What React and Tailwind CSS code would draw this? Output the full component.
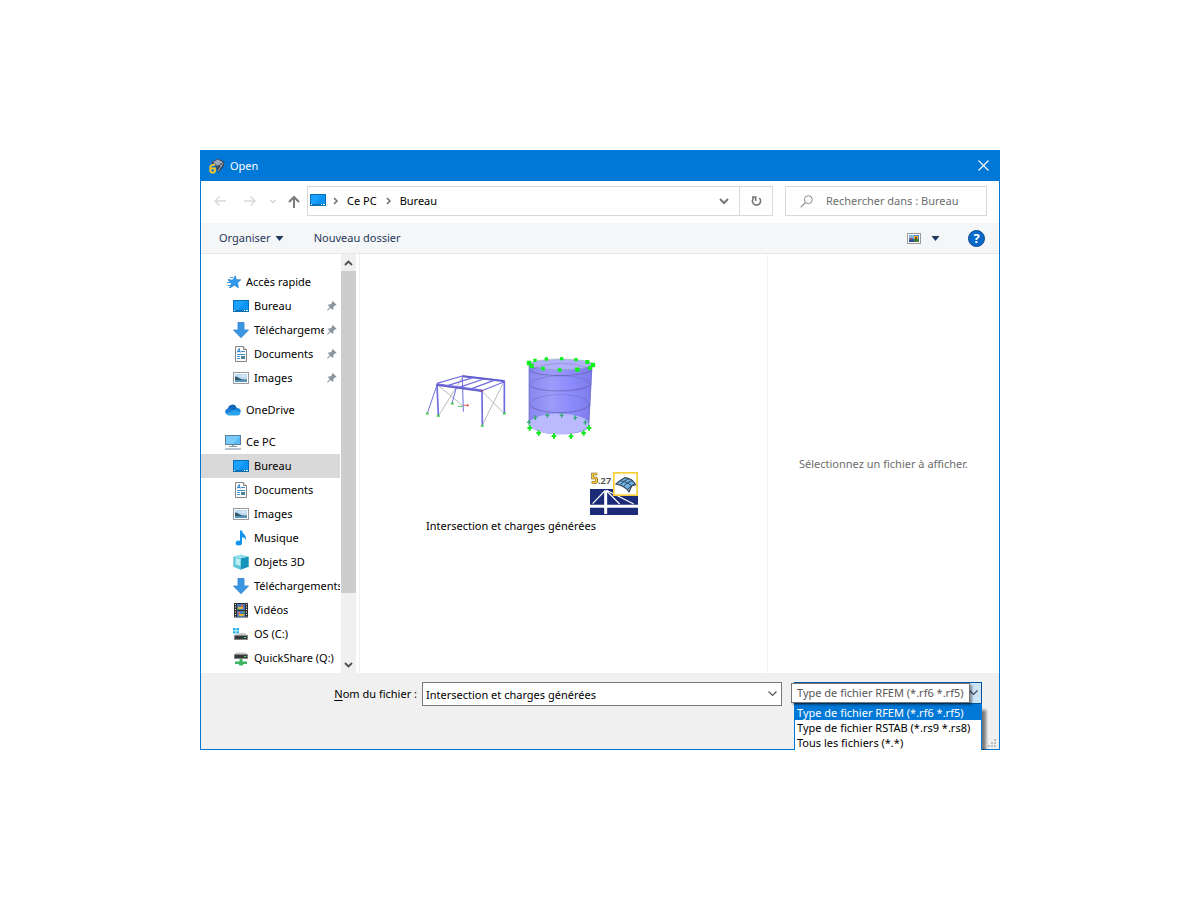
import React from "react";

function DesktopIcon() {
  return (
    <svg width="16" height="16" viewBox="0 0 16 16" aria-hidden="true">
      <rect x="0.5" y="2.5" width="15" height="11" fill="#1ba1fb" stroke="#0b6fb4" />
      <path d="M4 13 L12 3 H15 V13 Z" fill="#0e95f3" />
      <path d="M1 12.5 H15" stroke="#0b74bd" />
      <path d="M1 12.5 H2 M11 12.5 H12 M13 12.5 H15" stroke="#fff" />
    </svg>
  );
}

function StarIcon() {
  return (
    <svg width="16" height="16" viewBox="0 0 16 16" aria-hidden="true">
      <path
        d="M10.2 1.8 L11.3 5.7 L15.8 5.8 L12.5 8.8 L13.4 13.8 L9.5 11.2 L4.6 14 L6.3 9.5 L3.4 6.2 L8 5.9 Z"
        fill="#2f9bea"
        stroke="#1b7dc9"
        strokeWidth="0.7"
      />
      <path d="M5 3.5 H8 M3 5.5 H5 M2 8.5 H5 M2.500 11.500 H5" stroke="#3f9fe6" strokeWidth="1" />
    </svg>
  );
}

function DownloadIcon() {
  return (
    <svg width="16" height="16" viewBox="0 0 16 16" aria-hidden="true">
      <path d="M5 0.5 H11 V8 H15.5 L8 15.7 L0.5 8 H5 Z" fill="#3b97e4" stroke="#2b80cb" strokeWidth="0.8" />
    </svg>
  );
}

function DocumentIcon() {
  return (
    <svg width="16" height="16" viewBox="0 0 16 16" aria-hidden="true">
      <path d="M2.5 0.5 H10.5 L13.5 3.5 V15.5 H2.5 Z" fill="#fff" stroke="#868686" />
      <path d="M10.5 0.5 V3.5 H13.5" fill="#eee" stroke="#868686" />
      <path d="M4 6.5 L6.2 2.5 L7.2 6.5 M5 5.5 H7" stroke="#2d87cc" fill="none" />
      <path d="M8 5.5 H12 M4 8.5 H12 M4 10.5 H7 M4 12.5 H7" stroke="#3c8fca" />
      <rect x="8" y="10" width="4" height="3" fill="#4c8196" />
    </svg>
  );
}

function ImageIcon() {
  return (
    <svg width="16" height="16" viewBox="0 0 16 16" aria-hidden="true">
      <rect x="0.5" y="2.5" width="15" height="11" fill="#fff" stroke="#979ca1" />
      <rect x="2" y="4" width="12" height="8" fill="#bcdcf4" />
      <path d="M2 6.500 Q4 6 6 8 T14 9.500 V10.500 H2 Z" fill="#31586a" />
      <path d="M2 10.500 L8 10 L14 10.500 V12 H2 Z" fill="#5891bd" />
      <path d="M8 6 H13" stroke="#e8f4fd" />
    </svg>
  );
}

function CloudIcon() {
  return (
    <svg width="16" height="16" viewBox="0 0 16 16" aria-hidden="true">
      <path d="M3 6.5 A4.4 4.4 0 0 1 11.5 5.5 L13 8 L8 11 L2 10 Z" fill="#0f66b8" />
      <path d="M2.7 6.4 A3.3 3.3 0 0 0 1.2 12 L9 8.2 L5.5 6.3 Z" fill="#1a7fd4" />
      <path d="M11.2 6.2 A3.4 3.4 0 0 1 15.8 9.8 L14 11 L8.6 8 Z" fill="#1b89de" />
      <path d="M1.1 12 Q2 13.3 4 13.4 H13 Q15.3 13.2 15.7 10.8 L9 8 Z" fill="#2ba4ee" />
    </svg>
  );
}

function ComputerIcon() {
  return (
    <svg width="16" height="16" viewBox="0 0 16 16" aria-hidden="true">
      <rect x="0.5" y="1.5" width="15" height="9" fill="#58bbf5" stroke="#5a7d98" />
      <path d="M1 2 H15 L8 10 H1 Z" fill="#79ccfa" />
      <path d="M7 11 H9 V12 H7 Z" fill="#97a6b1" />
      <path d="M4 12.5 H12" stroke="#8394a4" />
      <path d="M0 15 H16" stroke="#9dafc0" strokeWidth="1.5" />
    </svg>
  );
}

function MusicIcon() {
  return (
    <svg width="16" height="16" viewBox="0 0 16 16" aria-hidden="true">
      <path d="M7 0.5 H9 C9.500 4 13.500 4.700 13 9.800 C12.4 8.500 10.5 7.300 9 7.200 V13 H7 Z" fill="#1393f0" />
      <ellipse cx="5.8" cy="13" rx="3.200" ry="2.500" fill="#1393f0" />
    </svg>
  );
}

function CubeIcon() {
  return (
    <svg width="16" height="16" viewBox="0 0 16 16" aria-hidden="true">
      <path d="M0.3 2.500 L8 0.5 L15.7 2.500 L8 4.500 Z" fill="#8fe0ec" />
      <path d="M0.3 2.500 L7.500 4.500 V15.800 L0.3 12.800 Z" fill="#5cc6d8" />
      <path d="M15.7 2.500 L7.500 4.500 V15.800 L15.7 12.800 Z" fill="#1693b9" />
      <path d="M2.500 4 L7.500 5.200 V12 L2.500 10.500 Z" fill="#b9eef5" />
    </svg>
  );
}

function VideoIcon() {
  return (
    <svg width="16" height="16" viewBox="0 0 16 16" aria-hidden="true">
      <rect x="1" y="1" width="14" height="14.5" fill="#303033" />
      <path d="M2.5 2 V15 M13.5 2 V15" stroke="#eee" strokeDasharray="1 1.5" />
      <rect x="4" y="2" width="8" height="6" fill="#4a78b8" />
      <rect x="4" y="9" width="8" height="6" fill="#4a78b8" />
      <path d="M5 5 H10 V7 H5 Z M6 12 H11 V14 H6 Z" fill="#e0b23a" />
      <path d="M4 6 L7 8 H4 Z M9 10 L12 12 V9 Z" fill="#4b9a56" />
      <path d="M8 3 H10 V5 H8 Z M5 10 H7 V12 H5 Z" fill="#cb6752" />
    </svg>
  );
}

function DriveIcon() {
  return (
    <svg width="16" height="16" viewBox="0 0 16 16" aria-hidden="true">
      <path d="M0 2 H2.6 V4.4 H0 Z M3.4 2 H6 V4.4 H3.4 Z M0 5.2 H2.6 V7.6 H0 Z M3.4 5.2 H6 V7.6 H3.4 Z" fill="#1fb4ee" />
      <path d="M3.5 7 H12.5 L14.5 10 H1.500 Z" fill="#c9ccce" />
      <rect x="1.5" y="9.5" width="13" height="4" fill="#343637" stroke="#858788" />
      <path d="M11 11.5 H13" stroke="#48e064" />
    </svg>
  );
}

function NetworkDriveIcon() {
  return (
    <svg width="16" height="16" viewBox="0 0 16 16" aria-hidden="true">
      <path d="M3.5 2.500 H12.5 L14.5 5 H1.500 Z" fill="#c9ccce" />
      <rect x="1.5" y="4.5" width="13" height="4" fill="#343637" stroke="#858788" />
      <path d="M11 6.5 H13" stroke="#48e064" />
      <path d="M6.500 9 H9.500 V11.5 H14 V14 H10.5 L9.5 15.500 H6.5 L5.5 14 H2 V11.5 H6.500 Z" fill="#3fb564" />
    </svg>
  );
}

function PinIcon() {
  return (
    <svg className="shrink-0" width="10" height="12" viewBox="0 0 10 12" aria-hidden="true">
      <path d="M5.6 1 L9.6 4.8 L8.6 5.4 L7.8 5.4 L6.3 7.3 V9.4 L5.4 9.8 L3.5 8 L0.6 10.8 L0 10.4 L2.6 7 L0.8 5 L1.4 4.4 L3.3 4.4 L5.2 2.8 L5 1.6 Z" fill="#8b959f" />
    </svg>
  );
}

const groups = [
  {
    label: "Accès rapide",
    Icon: StarIcon,
    items: [
      { label: "Bureau", Icon: DesktopIcon, pinned: true },
      { label: "Téléchargements", Icon: DownloadIcon, pinned: true },
      { label: "Documents", Icon: DocumentIcon, pinned: true },
      { label: "Images", Icon: ImageIcon, pinned: true },
    ],
  },
  { label: "OneDrive", Icon: CloudIcon, items: [] },
  {
    label: "Ce PC",
    Icon: ComputerIcon,
    items: [
      { label: "Bureau", Icon: DesktopIcon, selected: true },
      { label: "Documents", Icon: DocumentIcon },
      { label: "Images", Icon: ImageIcon },
      { label: "Musique", Icon: MusicIcon },
      { label: "Objets 3D", Icon: CubeIcon },
      { label: "Téléchargements", Icon: DownloadIcon },
      { label: "Vidéos", Icon: VideoIcon },
      { label: "OS (C:)", Icon: DriveIcon },
      { label: "QuickShare (Q:)", Icon: NetworkDriveIcon },
    ],
  },
];

function TitleBar() {
  return (
    <header className="flex h-[30px] items-center bg-[#0078d7] pl-2 text-white">
      <svg width="16" height="16" viewBox="0 0 16 16" aria-hidden="true">
        <path d="M2 4.500 L8 0.5 L15.5 3.500 L14.500 9 L9 15 L7 9 Z" fill="#3b4960" />
        <path d="M4 4.500 L8.500 1.500 L14 4 L8 8 Z" fill="#8d9bb0" />
        <path d="M5.5 3.500 L11 6.5 M7.500 2 L13 5 M14 5 L9 13 M11 7 L13 8.5" stroke="#c8d2df" strokeWidth="0.7" />
        <path d="M6 6.8 H3 L1.3 8.5 V13.3 L2.5 14.5 H5 L6 13.3 V10.5 H1.8" fill="none" stroke="#f7c52b" strokeWidth="1.8" />
      </svg>
      <h1 className="ml-[5px] flex-1">Open</h1>
      <button type="button" aria-label="Fermer" className="flex h-full w-8 items-center justify-center pb-px">
        <svg width="11" height="11" viewBox="0 0 11 11" aria-hidden="true">
          <path d="M0.5 0.5 L10.5 10.5 M10.5 0.5 L0.5 10.5" stroke="#fff" strokeWidth="1.1" />
        </svg>
      </button>
    </header>
  );
}

function Chevron() {
  return (
    <svg width="5" height="8" viewBox="0 0 5 8" aria-hidden="true">
      <path d="M1 1 L4 4 L1 7" fill="none" stroke="#6b6b6b" strokeWidth="1.5" />
    </svg>
  );
}

function NavigationBar() {
  return (
    <nav className="flex h-[42px] items-center pr-3 pb-[2px] pl-[13px]">
      <button type="button" aria-label="Précédent" disabled>
        <svg width="12" height="12" viewBox="0 0 12 12" aria-hidden="true">
          <path d="M12 6 H1 M5.5 1.5 L1 6 L5.5 10.5" fill="none" stroke="#d9d9d9" strokeWidth="1.5" />
        </svg>
      </button>
      <button type="button" aria-label="Suivant" disabled className="ml-[18px]">
        <svg width="12" height="12" viewBox="0 0 12 12" aria-hidden="true">
          <path d="M0 6 H11 M6.5 1.5 L11 6 L6.5 10.5" fill="none" stroke="#d9d9d9" strokeWidth="1.5" />
        </svg>
      </button>
      <button type="button" aria-label="Emplacements récents" className="ml-[14px]">
        <svg width="6" height="5" viewBox="0 0 6 5" aria-hidden="true">
          <path d="M0.5 1 L3 3.5 L5.5 1" fill="none" stroke="#cfcfcf" strokeWidth="1.3" />
        </svg>
      </button>
      <button type="button" aria-label="Dossier parent" className="ml-3">
        <svg width="12" height="13" viewBox="0 0 12 13" aria-hidden="true">
          <path d="M6 13 V2 M1 7 L6 2 L11 7" fill="none" stroke="#7b7b7b" strokeWidth="2" />
        </svg>
      </button>
      <div className="ml-[7px] flex h-[30px] flex-1 items-center border border-[#d9d9d9] pl-[2px]">
        <span className="pb-[2px]">
          <DesktopIcon />
        </span>
        <span className="ml-[7px] flex items-center gap-[9px]">
          <Chevron />
          <button type="button">Ce PC</button>
          <Chevron />
          <button type="button">Bureau</button>
        </span>
        <button type="button" aria-label="Historique" className="ml-auto flex w-[30px] items-center justify-center">
          <svg width="10" height="7" viewBox="0 0 10 7" aria-hidden="true">
            <path d="M1 1 L5 5 L9 1" fill="none" stroke="#777" strokeWidth="2" />
          </svg>
        </button>
        <button
          type="button"
          aria-label="Actualiser"
          className="flex h-full w-[33px] items-center justify-center border-l border-[#d9d9d9]"
        >
          <svg width="12" height="12" viewBox="0 0 12 12" aria-hidden="true">
            <path d="M3.8 2.9 A4.1 4.1 0 1 0 9.3 3 M2 2 H5.7 V6" fill="none" stroke="#777" strokeWidth="1.6" />
          </svg>
        </button>
      </div>
      <label className="ml-3 flex h-[30px] w-[202px] items-center border border-[#d9d9d9] pl-[14px]">
        <svg width="13" height="13" viewBox="0 0 13 13" aria-hidden="true">
          <circle cx="8.3" cy="4.7" r="4" fill="none" stroke="#8d8489" />
          <path d="M5.3 7.6 L0.7 12.3" stroke="#8d8489" strokeWidth="1.1" />
        </svg>
        <input
          type="search"
          aria-label="Rechercher"
          placeholder="Rechercher dans : Bureau"
          className="ml-[13px] min-w-0 flex-1 bg-transparent outline-none placeholder:text-[#6d6d6d]"
        />
      </label>
    </nav>
  );
}

function Caret() {
  return (
    <svg width="9" height="5" viewBox="0 0 9 5" aria-hidden="true">
      <path d="M0.5 0 H8.5 L4.5 5 Z" fill="#1e395b" />
    </svg>
  );
}

function Toolbar() {
  return (
    <div className="flex h-[31px] items-center border-b border-[#e5e7e9] bg-[#f5f6f7] pr-[14px] pl-[18px] text-[#1e395b]">
      <button type="button" className="flex items-center gap-1">
        Organiser
        <Caret />
      </button>
      <button type="button" className="ml-[30px]">Nouveau dossier</button>
      <button type="button" aria-label="Affichage" className="ml-auto flex items-center gap-[10px]">
        <svg width="14" height="11" viewBox="0 0 14 11" aria-hidden="true">
          <rect x="0.5" y="0.5" width="13" height="10" fill="#fff" stroke="#9a9a9a" />
          <rect x="2" y="2" width="10" height="7" fill="#4b82c5" />
          <path d="M2 2 H7 V5 H2 Z" fill="#86b6e8" />
          <path d="M3 5 H5 V8 H3 Z" fill="#c4453d" />
          <path d="M7 3 H11 V6 H7 Z" fill="#e8b32b" />
          <path d="M2 7 L6 6 L8 9 H2 Z" fill="#2f4f9a" />
          <path d="M7 6 H12 V9 H7 Z" fill="#417b3c" />
          <path d="M8 4 H10 V6 H8 Z" fill="#774b24" />
        </svg>
        <Caret />
      </button>
      <button
        type="button"
        aria-label="Aide"
        className="ml-7 flex size-[17px] items-center justify-center rounded-full border border-[#084a89] bg-[#0a6acb] text-[13px] leading-none font-bold text-white"
      >
        ?
      </button>
    </div>
  );
}

function TreeRow({ label, Icon, pinned, selected, nested }) {
  return (
    <button
      type="button"
      className={
        "flex h-6 w-full items-center gap-[5px] text-left " +
        (nested ? "pl-8 " : "pl-6 ") +
        (selected ? "bg-[#d9d9d9]" : "")
      }
    >
      <span className="shrink-0">
        <Icon />
      </span>
      <span className={"min-w-0 flex-1 overflow-hidden whitespace-nowrap " + (pinned ? "-mr-[2px]" : "")}>{label}</span>
      {pinned && (
        <span className="shrink-0 pr-[3px]">
          <PinIcon />
        </span>
      )}
    </button>
  );
}

function Sidebar() {
  return (
    <aside className="flex w-[159px] shrink-0 border-r border-[#f0f0f0]">
      <ul className="flex w-[139px] flex-col gap-2 pt-4 pb-[3px]">
        {groups.map((group) => (
          <li key={group.label}>
            <TreeRow label={group.label} Icon={group.Icon} />
            <ul>
              {group.items.map((item) => (
                <li key={item.label}>
                  <TreeRow {...item} nested />
                </li>
              ))}
            </ul>
          </li>
        ))}
      </ul>
      <div className="ml-px flex w-[15px] flex-col bg-[#f0f0f0]">
        <button type="button" aria-label="Défiler vers le haut" className="flex h-[17px] items-center justify-center">
          <svg width="9" height="6" viewBox="0 0 9 6" aria-hidden="true">
            <path d="M1 5 L4.5 1.5 L8 5" fill="none" stroke="#505050" strokeWidth="1.8" />
          </svg>
        </button>
        <div className="h-[322px] bg-[#cdcdcd]" />
        <button type="button" aria-label="Défiler vers le bas" className="mt-auto flex h-[17px] items-center justify-center">
          <svg width="9" height="6" viewBox="0 0 9 6" aria-hidden="true">
            <path d="M1 1 L4.5 4.5 L8 1" fill="none" stroke="#505050" strokeWidth="1.8" />
          </svg>
        </button>
      </div>
    </aside>
  );
}

const topNodes = [
  [342, 54, 13], [360, 46, 10], [394, 42, 10], [440, 41, 10], [483, 44, 10], [517, 51, 12],
  [534, 60, 13], [525, 69, 12], [487, 74, 13], [434, 75, 11], [384, 71, 11], [350, 63, 13],
];
const backSupports = [[361, 218], [397, 211], [440, 211], [481, 218], [511, 232], [342, 232]];
const frontSupports = [[344, 249], [371, 264], [417, 273], [468, 274], [506, 264], [522, 249]];

function ModelPreview() {
  return (
    <svg width="190" height="105" viewBox="0 0 570 315" role="img" aria-label="Aperçu du modèle">
      <path
        d="M70 122 L141 180 M142 98 L72 210 M202 240 L267 110 M202 140 L266 204"
        stroke="#99999f"
        strokeWidth="2"
        fill="none"
      />
      <g stroke="#6f6ce0" fill="none">
        <path d="M66 120 L37 205 M124 128 L111 175 M142 93 L145 200" strokeWidth="3" />
        <path d="M66 118 L70 211 M201 140 L202 240 M268 109 L268 204" strokeWidth="5" />
        <path d="M66 115 L142 93 M98 122 L173 98 M130 128 L206 102 M164 133 L237 106 M201 137 L268 110" strokeWidth="3.500" />
        <path d="M142 94 L269 109" strokeWidth="6" />
        <path d="M64 118 L202 137" strokeWidth="7" />
      </g>
      <path d="M64 121 L202 140 M142 92 L269 107" stroke="#4b47ae" strokeWidth="2" />
      <path d="M145 181 H160 M156 178 L161 181 L156 185" stroke="#e04343" strokeWidth="2.500" fill="none" />
      <path d="M129 184 H144" stroke="#3fc64b" strokeWidth="3" />
      <circle cx="201" cy="138" r="3" fill="#a23a65" />
      {[[37, 206], [70, 213], [112, 176], [202, 243], [268, 206]].map(([x, y]) => (
        <path key={x} d={`M${x} ${y - 5} l4 6 h-8 Z M${x - 5} ${y + 1} h10`} fill="#35c847" stroke="#35c847" strokeWidth="1.5" />
      ))}

      <defs>
        <linearGradient id="shell" x1="0" x2="1">
          <stop offset="0" stopColor="#8786ee" />
          <stop offset="0.35" stopColor="#9d9bfa" />
          <stop offset="0.65" stopColor="#8e8cfc" />
          <stop offset="1" stopColor="#7d7bea" />
        </linearGradient>
      </defs>
      <path d="M342 57 L342 236 C350 258 392 268 438 268 C485 268 518 256 522 245 L532 60 Z" fill="url(#shell)" />
      <ellipse cx="432" cy="237" rx="90" ry="31" fill="#bcbaff" />
      <ellipse cx="438" cy="58" rx="95" ry="16" fill="#b2b0fb" stroke="#7fb59c" strokeWidth="1.5" />
      <g fill="none" stroke="#44427f" strokeWidth="1.3">
        <path d="M344 76 C360 96 506 98 529 75" />
        <path d="M343 120 C355 143 505 145 527 118" />
        <path d="M343 178 C357 210 505 212 525 178" />
        <path d="M343 120 C357 84 510 84 527 118 M343 178 C362 139 508 139 525 178 M346 74 Q436 36 528 72" opacity="0.55" />
      </g>
      <path d="M342 60 V236 M531 62 L521 247" stroke="#6a69c4" strokeWidth="2" />
      {topNodes.map(([x, y, size]) => (
        <rect key={x} x={x - size / 2} y={y - size / 2} width={size} height={size} rx="2" fill="#0cf21a" />
      ))}
      {backSupports.map(([x, y]) => (
        <path key={x} d={`M${x - 6} ${y} h12 M${x} ${y - 7} v14`} stroke="#36a978" strokeWidth="4" />
      ))}
      {frontSupports.map(([x, y]) => (
        <path key={x} d={`M${x - 7} ${y} h14 M${x} ${y - 8} v16`} stroke="#17e825" strokeWidth="6" />
      ))}
    </svg>
  );
}

function FileBadge() {
  return (
    <svg width="48" height="44" viewBox="0 0 144 132" aria-hidden="true">
      <path d="M22 9 H8 V21 H17 L20 24 V31 L17 34 H5" fill="none" stroke="#5c4c24" strokeWidth="8" />
      <path d="M22 9 H8 V21 H17 L20 24 V31 L17 34 H5" fill="none" stroke="#f7ca36" strokeWidth="5" />
      <text x="23" y="38" fontFamily="Noto Sans, sans-serif" fontWeight="600" fontSize="29" fill="#4d4d4d">.27</text>
      <rect x="0" y="54" width="144" height="78" fill="#1b2b78" />
      <path d="M0 106 H144" stroke="#fff" strokeWidth="9" />
      <path d="M47 58 V129" stroke="#fff" strokeWidth="9" />
      <path d="M44 60 L8 98 M50 60 L89 99 M50 58 L131 99" stroke="#fff" strokeWidth="3.500" />
      <rect x="71.500" y="5.500" width="70" height="67" fill="#fff" stroke="#f6cf38" strokeWidth="5" />
      <path d="M78 39 Q90 27 104 20 Q127 22 137 41 L125 45 L117 63 Q106 45 78 39 Z" fill="#6db2e4" stroke="#3a4450" strokeWidth="3.500" />
      <path d="M91 29 Q118 35 125 45 M101 46 Q110 33 127 29 M91 41 Q101 30 116 23 M112 56 Q120 45 134 39" fill="none" stroke="#34495b" strokeWidth="3" />
    </svg>
  );
}

function FilePane() {
  return (
    <main className="min-w-0 flex-1 pt-[91px] pl-[55px]">
      <button type="button" className="block text-left">
        <ModelPreview />
        <span className="mt-[21px] flex pl-[175px]">
          <FileBadge />
        </span>
        <span className="block pt-px pl-[11px] leading-5">Intersection et charges générées</span>
      </button>
    </main>
  );
}

function Footer() {
  const types = ["Type de fichier RFEM (*.rf6 *.rf5)", "Type de fichier RSTAB (*.rs9 *.rs8)", "Tous les fichiers (*.*)"];
  return (
    <footer className="relative flex h-[76px] items-start bg-[#f0f0f0] pt-[9px] pr-[17px]">
      <label htmlFor="file-name" className="w-[221px] pr-[5px] text-right leading-6">
        <u className="underline-offset-2">N</u>om du fichier :
      </label>
      <div className="flex h-6 flex-1 items-center border border-[#7a7a7a] bg-white">
        <input
          id="file-name"
          defaultValue="Intersection et charges générées"
          className="h-full min-w-0 flex-1 pl-[3px] outline-none"
        />
        <button type="button" aria-label="Noms récents" className="flex w-[17px] items-center justify-center">
          <svg width="9" height="6" viewBox="0 0 9 6" aria-hidden="true">
            <path d="M0.500 0.500 L4.500 4.500 L8.500 0.500" fill="none" stroke="#555" strokeWidth="1.2" />
          </svg>
        </button>
      </div>
      <div className="relative ml-3 w-[188px]">
        <select
          aria-label="Type de fichier"
          className="block h-[22px] w-full appearance-none border border-[#005499] bg-[#cce4f7] pl-[2px] outline-none"
        >
          {types.map((type) => (
            <option key={type}>{type}</option>
          ))}
        </select>
        <svg className="pointer-events-none absolute top-2 right-1" width="9" height="6" viewBox="0 0 9 6" aria-hidden="true">
          <path d="M0.500 0.500 L4.500 4.500 L8.500 0.500" fill="none" stroke="#404a55" strokeWidth="1.2" />
        </svg>
        <div className="absolute top-[22px] left-0 h-[46px] w-[194px] overflow-hidden">
          <ul
            role="listbox"
            aria-label="Types de fichier"
            className="h-[60px] w-[188px] border border-[#0078d7] bg-white leading-[15px] shadow-[4px_6px_3px_rgba(0,0,0,0.5)]"
          >
            {types.map((type, index) => (
              <li
                key={type}
                role="option"
                aria-selected={index === 0}
                className={"px-[2px] whitespace-nowrap " + (index === 0 ? "bg-[#0078d7] text-white" : "")}
              >
                {type}
              </li>
            ))}
          </ul>
        </div>
        <div
          role="tooltip"
          className="absolute top-px -left-[3px] h-5 border border-[#767676] bg-white px-[5px] leading-[18px] whitespace-nowrap text-[#575757] shadow-[2px_2px_2px_rgba(0,0,0,0.4)]"
        >
          {types[0]}
        </div>
      </div>
      <svg className="absolute right-[3px] bottom-[2px]" width="8" height="8" viewBox="0 0 8 8" aria-hidden="true">
        <path d="M6 0 h2 v2 h-2 Z M3 3 h2 v2 h-2 Z M6 3 h2 v2 h-2 Z M0 6 h2 v2 h-2 Z M3 6 h2 v2 h-2 Z M6 6 h2 v2 h-2 Z" fill="#bfbfbf" />
      </svg>
    </footer>
  );
}

export default function App() {
  return (
    <div className="flex min-h-screen items-center justify-center bg-white font-['Noto_Sans',sans-serif] text-[11px] leading-4 text-black">
      <section className="w-2/3 min-w-[760px] border border-[#0078d7] bg-white" aria-label="Open">
        <TitleBar />
        <NavigationBar />
        <Toolbar />
        <div className="flex">
          <Sidebar />
          <FilePane />
          <section className="flex w-[232px] shrink-0 items-center justify-center border-l border-[#f3f3f3] text-[#6d6d6d]">
            Sélectionnez un fichier à afficher.
          </section>
        </div>
        <Footer />
      </section>
    </div>
  );
}
